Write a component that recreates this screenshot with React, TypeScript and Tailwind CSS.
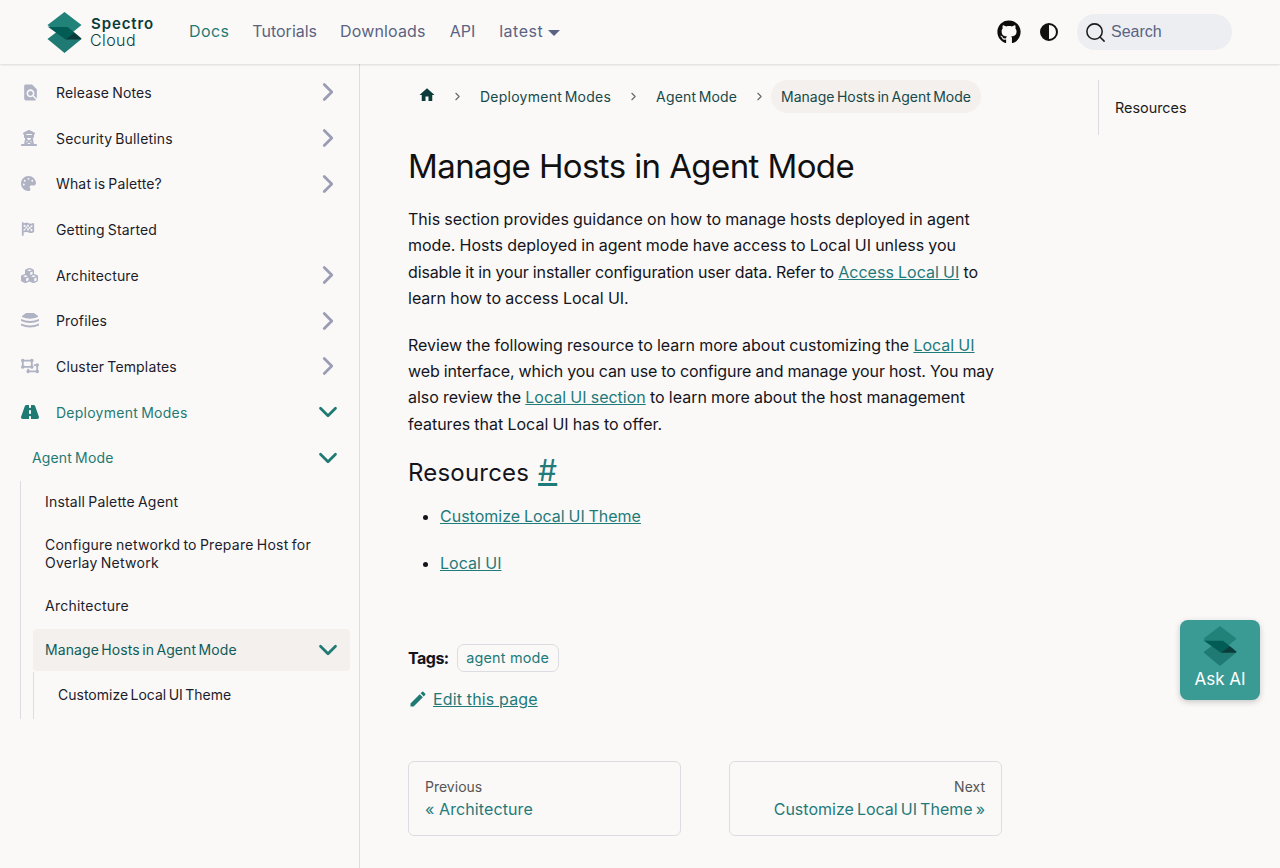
import { ChevronDown, ChevronRight, Search } from 'lucide-react'
import { FaCubes, FaFlagCheckered, FaGithub, FaObjectUngroup, FaPalette, FaRoad, FaTowerObservation } from 'react-icons/fa6'
import { MdEdit, MdFindInPage, MdHome } from 'react-icons/md'

const body = "font-['Inter',sans-serif]"
const link = 'text-[#1f7a7a] underline'

const Logo = ({ className }: { className: string }) => (
  <svg viewBox="0 0 34 41" className={className}>
    <path d="M17 14 L34 27 L17 41 L0 27 Z" fill="#1f7a73" />
    <path d="M17 0 L34 13 L17 27 L0 13 Z" fill="#21827a" />
    <path d="M3 15 H20 L27 20.500 L18 27.500 L0 14.500 Z" fill="#005c55" />
    <path d="M18 27.500 L27 20.500 L34 26.500 L33 27.500 Z" fill="#0b3b3a" />
  </svg>
)

const Layers = () => (
  <svg viewBox="0 0 18 16" className="w-[18px] h-[16px]" fill="currentColor">
    <path d="M5 0 L9 -0.500 L13 0 L17 3 L17 4 Q9 7.500 1 4 L1 3 Z" />
    <path d="M0 6 Q9 10 18 6 V8 Q9 12 0 8 Z" />
    <path d="M0 10.500 Q9 14.500 18 10.500 V12.500 Q9 16.500 0 12.500 Z" />
  </svg>
)

const topItems = [
  { label: 'Release Notes', icon: <MdFindInPage className="w-[19px] h-[19px]" />, more: true },
  { label: 'Security Bulletins', icon: <FaTowerObservation className="w-[16px] h-[16px]" />, more: true },
  { label: 'What is Palette?', icon: <FaPalette className="w-[15px] h-[15px]" />, more: true },
  { label: 'Getting Started', icon: <FaFlagCheckered className="w-[14px] h-[14px]" />, more: false },
  { label: 'Architecture', icon: <FaCubes className="w-[17px] h-[17px]" />, more: true },
  { label: 'Profiles', icon: <Layers />, more: true },
  { label: 'Cluster Templates', icon: <FaObjectUngroup className="w-[18px] h-[18px]" />, more: true },
]

const SideRow = ({ label, icon, more }: { label: string; icon: React.ReactNode; more: boolean }) => (
  <div className="flex items-center h-[45.7px] pl-[21px] pr-[20px]">
    <span className="w-[35px] text-[#b0b3c4] flex items-center">{icon}</span>
    <span className="flex-1 text-[14px] tracking-[0.15px] [word-spacing:-1px] text-[#1c1c2b]">{label}</span>
    {more && <ChevronRight className="w-[30px] h-[30px] -mx-[4px] text-[#9a9db3]" strokeWidth={2.200} />}
  </div>
)

const App = () => {
  return (
    <div className={`${body} relative w-[1280px] h-[868px] overflow-hidden bg-[#faf9f8] text-[#14141c]`}>
      <header className="h-[64px] flex items-center pl-[47px] pr-[48px] bg-[#faf9f8] shadow-[0_1px_2px_rgba(0,0,0,0.12)] relative">
        <Logo className="w-[35px] h-[41px]" />
        <div className="ml-[9px] w-[63px] text-[#0b3b3a]">
          <div className="text-[15px] leading-[17px] tracking-[0.9px] font-semibold">Spectro</div>
          <div className="text-[16px] leading-[17px] tracking-[0.4px] font-light -ml-px">Cloud</div>
        </div>
        <nav className="flex items-center ml-[35px] -mt-[2px] text-[16px] text-[#5b6382]">
          <span className="text-[#1f7a73] tracking-[0.4px]">Docs</span>
          <span className="ml-[23px]">Tutorials</span>
          <span className="ml-[23px] tracking-[0.15px]">Downloads</span>
          <span className="ml-[24px]">API</span>
          <span className="ml-[24px] tracking-[0.5px] flex items-center gap-[5px]">latest<span className="w-0 h-0 mt-[3px] border-x-[6px] border-x-transparent border-t-[6px] border-t-[#5b6382]" /></span>
        </nav>
        <div className="ml-auto flex items-center">
          <FaGithub className="w-[24px] h-[24px] text-[#0c0c0c]" />
          <svg viewBox="0 0 18 18" className="w-[18px] h-[18px] ml-[19px]">
            <circle cx="9" cy="9" r="8" fill="#faf9f8" stroke="#111" strokeWidth="2" />
            <path d="M9 1 A8 8 0 0 0 9 17 Z" fill="#111" />
          </svg>
          <div className="ml-[19px] w-[155px] h-[36px] rounded-full bg-[#eceef2] flex items-center pl-[7px] gap-[4px]">
            <Search className="w-[23px] h-[23px] text-[#1c1c1c]" strokeWidth={1.600} />
            <span className="font-['Liberation_Sans',sans-serif] text-[16px] text-[#5b6382]">Search</span>
          </div>
        </div>
      </header>

      <div className="flex h-[804px]">
        <aside className="w-[360px] shrink-0 border-r border-[#dcdde3] pt-[5.500px]">
          {topItems.map((item) => (
            <SideRow key={item.label} {...item} />
          ))}
          <div className="flex items-center h-[45.7px] pl-[21px] pr-[20px] text-[#1f7a73]">
            <span className="w-[35px] flex items-center"><FaRoad className="w-[18px] h-[18px]" /></span>
            <span className="flex-1 text-[14px] tracking-[0.25px] [word-spacing:-1px]">Deployment Modes</span>
            <ChevronDown className="w-[30px] h-[30px] -mx-[4px]" strokeWidth={2.200} />
          </div>
          <div className="flex items-center h-[45.7px] pl-[32px] pr-[20px] text-[#1f7a73]">
            <span className="flex-1 text-[14px] tracking-[0.15px] [word-spacing:-1px]">Agent Mode</span>
            <ChevronDown className="w-[30px] h-[30px] -mx-[4px]" strokeWidth={2.200} />
          </div>
          <div className="ml-[20px] border-l border-[#dcdde3] text-[14px] tracking-[0.1px] [word-spacing:-1px] text-[#1c1c2b] pr-[9px]">
            <div className="h-[42px] flex items-center pl-[24px] tracking-[0.2px]">Install Palette Agent</div>
            <div className="pt-[13.500px] pb-[11px] pl-[24px] leading-[18px] pr-[30px] tracking-[0.25px]">Configure networkd to Prepare Host for Overlay Network</div>
            <div className="h-[44px] mb-[2px] flex items-center pl-[24px] tracking-[0.25px]">Architecture</div>
            <div className="ml-[12px] h-[42px] flex items-center pl-[12px] pr-[11px] pb-[1px] rounded-[4px] bg-[#f3f0ed]">
              <span className="flex-1 text-[#0f5c5a] [word-spacing:-1.700px]">Manage Hosts in Agent Mode</span>
              <ChevronDown className="w-[30px] h-[30px] -mx-[4px] text-[#1f7a73]" strokeWidth={2.200} />
            </div>
            <div className="ml-[12px] mt-[1px] border-l border-[#dcdde3] h-[47px] pb-[3px] flex items-center pl-[24px] tracking-normal [word-spacing:-1.500px]">Customize Local UI Theme</div>
          </div>
        </aside>

        <main className="w-[642px] pl-[48px] pt-[16px] shrink-0">
          <div className="flex items-center h-[33px] text-[14px] text-[#17494a] [word-spacing:-1.500px]">
            <MdHome className="w-[18px] h-[18px] text-[#0b3b3a] ml-[10px] -mt-[3px]" />
            <ChevronRight className="w-[13px] h-[13px] ml-[15px] text-[#666]" />
            <span className="ml-[16px] tracking-[0.25px]">Deployment Modes</span>
            <ChevronRight className="w-[13px] h-[13px] ml-[16px] text-[#666]" />
            <span className="ml-[16px] tracking-[0.15px]">Agent Mode</span>
            <ChevronRight className="w-[13px] h-[13px] ml-[16px] text-[#666]" />
            <span className="ml-[5px] h-[33px] px-[10px] flex items-center rounded-full bg-[#f3f0ed]">Manage Hosts in Agent Mode</span>
          </div>
          <h1 className="mt-[31px] text-[33px] leading-[44px] tracking-[-0.6px] font-normal text-[#111]">Manage Hosts in Agent Mode</h1>
          <p className="mt-[18px] text-[16px] leading-[26.400px] [word-spacing:-0.300px]">
            This section provides guidance on how to manage hosts deployed in agent mode. Hosts deployed in agent mode have access to Local UI unless you <span className="tracking-[-0.12px]">disable it in your installer configuration user data. Refer to</span> <a className={link}>Access Local UI</a> to learn how to access Local UI.
          </p>
          <p className="mt-[20px] text-[16px] leading-[26.400px] [word-spacing:-0.300px]">
            Review the following resource to learn more about customizing the <a className={link}>Local UI</a> <span className="tracking-[-0.1px]">web interface, which you can use to configure and manage your host. You may</span> also review the <a className={link}>Local UI section</a> to learn more about the host management features that Local UI has to offer.
          </p>
          <h2 className="mt-[20px] h-[32px] text-[24px] leading-[32px] font-normal tracking-[0.2px]">Resources <a className={`ml-[2px] text-[30px] leading-[20px] ${link}`}>#</a></h2>
          <ul className="mt-[14px] pl-[32px] list-disc text-[16px] leading-[26.400px]">
            <li><a className={`[word-spacing:-0.700px] ${link}`}>Customize Local UI Theme</a></li>
            <li className="mt-[20px]"><a className={link}>Local UI</a></li>
          </ul>
          <div className="mt-[68px] flex items-center">
            <span className="text-[16px] font-bold tracking-[-0.5px]">Tags:</span>
            <span className="ml-[8px] h-[28px] px-[8.500px] flex items-center rounded-[7px] border border-[#dcdde3] text-[14.400px] tracking-[0.2px] text-[#1f7a7a]">agent mode</span>
          </div>
          <div className="mt-[13px] flex items-center h-[27px]">
            <MdEdit className="w-[20px] h-[20px] text-[#1f7a73]" />
            <a className={`ml-[5px] text-[16px] tracking-[0.15px] ${link}`}>Edit this page</a>
          </div>
          <div className="mt-[49px] flex gap-[48px]">
            <div className="flex-1 h-[75px] rounded-[6px] border border-[#dcdde3] px-[16px] pt-[15px]">
              <div className="text-[14px] leading-[20px] text-[#555]">Previous</div>
              <div className="text-[16px] leading-[24px] tracking-[0.1px] text-[#1f7a7a]">« Architecture</div>
            </div>
            <div className="flex-1 h-[75px] rounded-[6px] border border-[#dcdde3] px-[16px] pt-[15px] text-right">
              <div className="text-[14px] leading-[20px] text-[#555]">Next</div>
              <div className="text-[16px] leading-[24px] text-[#1f7a7a] [word-spacing:-1.400px]">Customize Local UI Theme »</div>
            </div>
          </div>
        </main>

        <div className="ml-[96px] mt-[16px] h-[55px] border-l border-[#dcdde3] pl-[16px] flex items-center text-[14.400px] text-[#1c1c1c]">Resources</div>
      </div>

      <button className="absolute left-[1180px] top-[620px] w-[80px] h-[80px] rounded-[8px] bg-[#3a9a94] shadow-[0_2px_6px_rgba(0,0,0,0.2)] flex flex-col items-center pt-[6px]">
        <Logo className="w-[34px] h-[40px]" />
        <span className="text-[17px] leading-[24px] text-white mt-[1px]">Ask AI</span>
      </button>
    </div>
  )
}

export default App
